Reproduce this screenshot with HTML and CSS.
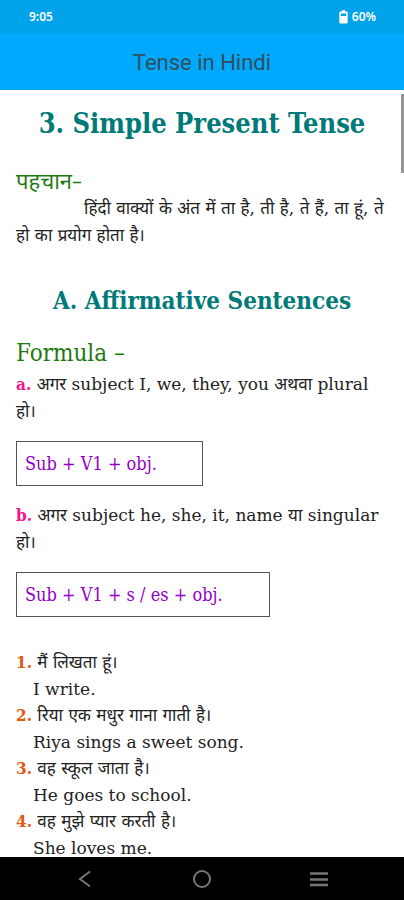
FILE: index.html
```html
<!DOCTYPE html>
<html lang="hi">
<head>
    <meta charset="UTF-8">
    <meta name="viewport" content="width=device-width, initial-scale=1.0">
    <title>Tense in Hindi</title>
    <link rel="stylesheet" href="styles.css">
</head>
<body>
    <div class="status-bar">
        <span>9:05</span>
        <span class="battery">
            <svg width="9" height="14" viewBox="0 0 9 14" aria-hidden="true">
                <path d="M3 0h3v1.5h1.5a1.2 1.2 0 0 1 1.2 1.2v9.6a1.2 1.2 0 0 1-1.2 1.2h-6a1.2 1.2 0 0 1-1.2-1.2v-9.6a1.2 1.2 0 0 1 1.2-1.2h1.5z" fill="#fff"/>
                <path d="M2 3.5h5v2.5h-5z" fill="#00a3ea"/>
            </svg>
            60%
        </span>
    </div>

    <header class="app-bar">Tense in Hindi</header>

    <main class="content">
        <h1>3. Simple Present Tense</h1>

        <h3 class="label">पहचान–</h3>
        <p class="intro">हिंदी वाक्यों के अंत में ता है, ती है, ते हैं, ता हूं, ते हो का प्रयोग होता है।</p>

        <h2>A. Affirmative Sentences</h2>

        <h3 class="formula-title">Formula –</h3>
        <p><b class="mark">a.</b> अगर subject I, we, they, you अथवा plural हो।</p>
        <div class="formula">Sub + V1 + obj.</div>
        <p><b class="mark">b.</b> अगर subject he, she, it, name या singular हो।</p>
        <div class="formula formula-wide">Sub + V1 + s / es + obj.</div>

        <ul class="examples">
            <li><b>1.</b> मैं लिखता हूं।<span>I write.</span></li>
            <li><b>2.</b> रिया एक मधुर गाना गाती है।<span>Riya sings a sweet song.</span></li>
            <li><b>3.</b> वह स्कूल जाता है।<span>He goes to school.</span></li>
            <li><b>4.</b> वह मुझे प्यार करती है।<span>She loves me.</span></li>
        </ul>
        <div class="scroll-thumb"></div>
    </main>

    <nav class="nav-bar">
        <button type="button" aria-label="Back">
            <svg width="20" height="20" viewBox="0 0 20 20"><path d="M15 2.5 5 10l10 7.5" fill="none" stroke="#777" stroke-width="2"/></svg>
        </button>
        <button type="button" aria-label="Home">
            <svg width="20" height="20" viewBox="0 0 20 20"><circle cx="10" cy="10" r="8" fill="none" stroke="#777" stroke-width="2"/></svg>
        </button>
        <button type="button" aria-label="Recent apps">
            <svg width="20" height="20" viewBox="0 0 20 20"><path d="M1 4.5h18M1 10.5h18M1 16h18" stroke="#777" stroke-width="2.4"/></svg>
        </button>
    </nav>
</body>
</html>
```

FILE: styles.css
```css
* {
    box-sizing: border-box;
}
body {
    display: flex;
    flex-direction: column;
    height: 100vh;
    margin: 0;
    background-color: #fff;
    color: #222;
    font-family: "DejaVu Serif", "Noto Sans Devanagari", "Noto Sans", serif;
    font-size: 17px;
    line-height: 27px;
}
h1, h2, h3, p {
    margin: 0;
}
.status-bar {
    display: flex;
    justify-content: space-between;
    align-items: center;
    padding: 3px 28px 3px 29px;
    background-color: #00a3ea;
    color: #fff;
    font-family: "Noto Sans", sans-serif;
    font-size: 12px;
    font-weight: 600;
}
.battery {
    display: flex;
    align-items: center;
    gap: 4px;
}
.app-bar {
    padding: 16px 0 14px;
    background-color: #00a9fe;
    color: #2f4f5c;
    font-family: Roboto, sans-serif;
    font-size: 22px;
    text-align: center;
}
.content {
    position: relative;
    flex: 1;
    min-height: 0;
    overflow: hidden;
    padding: 16px 16px 0;
}
h1, h2, h3, b, .formula {
    font-family: "DejaVu Serif Condensed", "DejaVu Serif", "Noto Sans Devanagari", "Noto Sans", serif;
}
h1, h2 {
    color: #007a78;
    line-height: 36px;
    text-align: center;
}
h1 {
    font-size: 27px;
}
h2 {
    margin-top: 34px;
    font-size: 24px;
}
h3 {
    color: #1e7a10;
    font-size: 22px;
    font-weight: normal;
}
.label {
    margin-top: 26px;
}
.intro {
    text-indent: 68px;
}
.formula-title {
    margin: 21px 0 4px;
    font-size: 24px;
}
.mark {
    color: #f5148c;
}
.formula {
    width: 187px;
    margin: 16px 0;
    padding: 8px;
    border: 1px solid #555;
    color: #9400c8;
    font-size: 18px;
}
.formula-wide {
    width: 254px;
}
.examples {
    margin: 32px 0 0;
    padding: 0;
    list-style: none;
}
.examples b {
    color: #e6560f;
}
.examples span {
    display: block;
    padding-left: 17px;
    line-height: 26px;
}
.scroll-thumb {
    position: absolute;
    top: 4px;
    right: 0;
    width: 3px;
    height: 79px;
    background-color: #949494;
}
.nav-bar {
    display: flex;
    justify-content: space-around;
    align-items: center;
    height: 43px;
    padding: 0 27px;
    background-color: #000;
}
.nav-bar button {
    display: flex;
    padding: 0;
    border: none;
    background: none;
}
```
